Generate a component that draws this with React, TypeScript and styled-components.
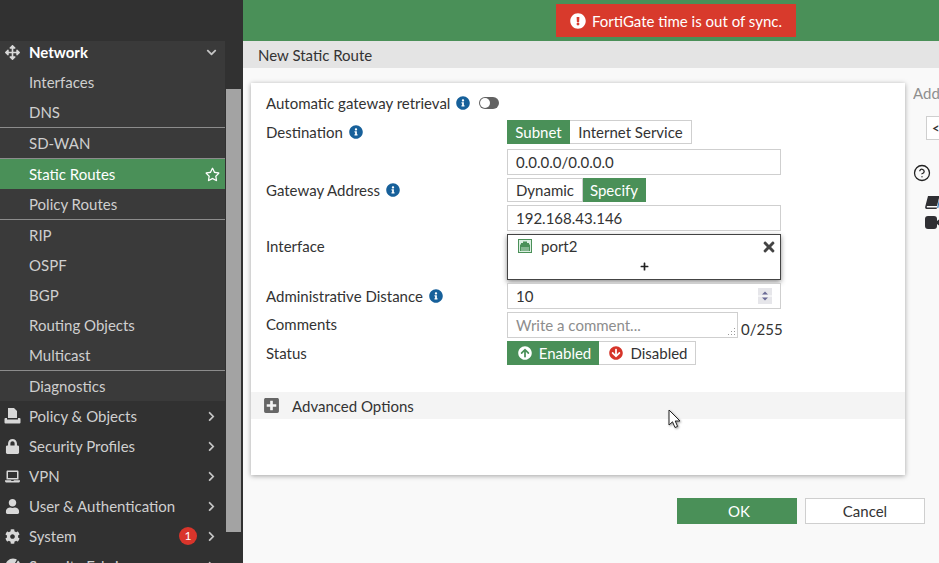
import React from "react";
import styled, { createGlobalStyle } from "styled-components";
import { CircleHelp } from "lucide-react";
import {
  FaArrowCircleDown,
  FaArrowCircleUp,
  FaArrowsAlt,
  FaChevronDown,
  FaChevronRight,
  FaCog,
  FaExclamationCircle,
  FaInfoCircle,
  FaLaptop,
  FaLock,
  FaPlus,
  FaPlusSquare,
  FaRegStar,
  FaTimes,
  FaUser,
} from "react-icons/fa";

const GREEN = "#4a9058";
const BORDER = "#cfcfcf";

const GlobalStyle = createGlobalStyle`
  html, body {
    margin: 0;
    height: 100%;
    overflow: hidden;
  }
  body {
    font-family: Lato, "Open Sans", sans-serif;
    font-size: 15px;
    color: #333;
  }
  * {
    box-sizing: border-box;
  }
`;

const Page = styled.div`
  display: flex;
  width: 939px;
  height: 563px;
  overflow: hidden;
  position: relative;
`;

/* sidebar */
const Sidebar = styled.aside`
  flex: 0 0 243px;
  display: flex;
  height: 563px;
  padding-top: 41px;
  background: #313131;
  overflow: hidden;
`;

const Nav = styled.nav`
  flex: 0 0 225px;
`;

const NetworkGroup = styled.div`
  background: #3a3a3a;
`;

const ScrollTrack = styled.div`
  flex: 1;
  padding: 48px 2px 0 1px;
`;

const ScrollThumb = styled.div`
  height: 443px;
  background: #a3a3a3;
`;

const Divider = styled.div`
  height: 1px;
  background: #8c8c8c;
`;

const Row = styled.div<{ $active?: boolean; $head?: boolean }>`
  display: flex;
  align-items: center;
  height: ${({ $head }) => ($head ? "26px" : "30px")};
  padding-bottom: ${({ $head }) => ($head ? "4px" : "0")};
  background: ${({ $active }) => ($active ? GREEN : "transparent")};
  color: ${({ $active, $head }) => ($active || $head ? "#fff" : "#cfcfcf")};
  font-weight: ${({ $head }) => ($head ? 700 : 400)};
  white-space: nowrap;
`;

const Lead = styled.span`
  flex: 0 0 29px;
  display: flex;
  justify-content: center;
  padding-right: 4px;
  font-size: 15px;
  color: #d8d8d8;
`;

const Trail = styled.span`
  display: flex;
  align-items: center;
  margin-left: auto;
  padding-right: 8px;
  font-size: 11px;
  color: #c4c4c4;
`;

const StarSlot = styled.span`
  display: flex;
  margin-left: auto;
  padding-right: 5px;
  font-size: 15px;
  color: #fff;
`;

const Badge = styled.span`
  width: 18px;
  height: 18px;
  margin-right: 9px;
  border-radius: 50%;
  background: #d9352b;
  color: #fff;
  font-size: 12px;
  line-height: 18px;
  text-align: center;
`;

/* main */
const Main = styled.main`
  flex: 1;
  min-width: 0;
  display: flex;
  flex-direction: column;
  background: #f9f9f9;
`;

const TopBar = styled.header`
  flex: 0 0 41px;
  padding: 4px 0 0 313px;
  background: ${GREEN};
`;

const Toast = styled.div`
  display: flex;
  align-items: center;
  justify-content: center;
  gap: 6px;
  width: 240px;
  height: 33px;
  background: #d83a2c;
  color: #fff;
  svg {
    font-size: 16px;
  }
`;

const TitleBar = styled.div`
  flex: 0 0 27px;
  display: flex;
  align-items: center;
  padding-left: 15px;
  background: #e4e4e4;
  color: #333;
`;

const Body = styled.div`
  padding: 15px 0 0 8px;
`;

const Columns = styled.div`
  display: flex;
`;

const Card = styled.section`
  flex: 0 0 654px;
  height: 392px;
  padding-top: 10px;
  background: #fff;
  box-shadow: 0 1px 5px rgba(0, 0, 0, 0.35);
`;

const FormRow = styled.div<{ $height: number; $gap?: number; $top?: boolean }>`
  display: flex;
  align-items: ${({ $top }) => ($top ? "flex-start" : "center")};
  height: ${({ $height }) => $height}px;
  margin-bottom: ${({ $gap }) => $gap ?? 3}px;
  padding-left: 15px;
`;

const Label = styled.label<{ $offset?: number }>`
  display: flex;
  align-items: center;
  gap: 6px;
  flex: 0 0 241px;
  color: #333;
  white-space: nowrap;
  padding-top: ${({ $offset }) => $offset ?? 0}px;
`;

const InfoIcon = styled(FaInfoCircle)`
  flex: none;
  font-size: 14px;
  color: #17609a;
`;

const Switch = styled.span`
  display: block;
  position: relative;
  width: 20px;
  height: 12px;
  margin-left: 3px;
  border-radius: 6px;
  background: #626262;
  &::before {
    content: "";
    position: absolute;
    left: 1px;
    top: 1px;
    width: 10px;
    height: 10px;
    border-radius: 50%;
    background: #fff;
  }
`;

const Segments = styled.div`
  display: flex;
  height: 24px;
`;

const Segment = styled.div<{ $on?: boolean; $width: number; $iconed?: boolean }>`
  display: flex;
  align-items: center;
  justify-content: center;
  gap: 7px;
  width: ${({ $width }) => $width}px;
  padding-left: ${({ $iconed }) => ($iconed ? "3px" : "0")};
  border: 1px solid ${({ $on }) => ($on ? GREEN : BORDER)};
  background: ${({ $on }) => ($on ? GREEN : "#fff")};
  color: ${({ $on }) => ($on ? "#fff" : "#333")};
  & + & {
    border-left-width: 0;
  }
`;

const UpIcon = styled(FaArrowCircleUp)`
  font-size: 14px;
  color: #fff;
`;

const DownIcon = styled(FaArrowCircleDown)`
  font-size: 14px;
  color: #d6352a;
`;

const Field = styled.div<{ $width?: number; $muted?: boolean }>`
  display: flex;
  align-items: center;
  position: relative;
  width: ${({ $width }) => $width ?? 274}px;
  height: 26px;
  padding-left: 8px;
  border: 1px solid ${BORDER};
  background: #fff;
  color: ${({ $muted }) => ($muted ? "#8d8d8d" : "#333")};
`;

const Spinner = styled.svg`
  position: absolute;
  right: 8px;
  top: 4px;
`;

const Grip = styled.svg`
  position: absolute;
  right: 1px;
  bottom: 1px;
`;

const Counter = styled.span`
  align-self: flex-end;
  margin-left: 3px;
  line-height: 18px;
  color: #333;
`;

const Picker = styled.div`
  width: 274px;
  height: 46px;
  border: 1px solid #444;
  background: #fff;
  box-shadow: 0 2px 5px rgba(0, 0, 0, 0.45);
`;

const PickerItem = styled.div`
  display: flex;
  align-items: center;
  height: 21px;
  padding: 0 3px 0 10px;
`;

const PortName = styled.span`
  margin-left: 9px;
`;

const Remove = styled(FaTimes)`
  margin-left: auto;
  margin-top: 3px;
  font-size: 16px;
  color: #444;
`;

const PickerAdd = styled.div`
  display: flex;
  justify-content: center;
  font-size: 9px;
  padding-top: 6px;
  color: #222;
`;

const Advanced = styled.div`
  display: flex;
  align-items: center;
  height: 27px;
  margin-top: 27px;
  padding-left: 12px;
  background: #f4f4f4;
  color: #333;
`;

const PlusBox = styled(FaPlusSquare)`
  margin-right: 12px;
  font-size: 17px;
  color: #666;
`;

const SidePanel = styled.div`
  flex: 1;
  min-width: 0;
  margin-left: 8px;
  padding-top: 1px;
  overflow: hidden;
  white-space: nowrap;
`;

const SideTitle = styled.div`
  color: #8f8f8f;
  line-height: 18px;
`;

const ApiButton = styled.div`
  display: flex;
  align-items: center;
  width: 120px;
  height: 24px;
  margin: 14px 0 0 13px;
  padding-left: 5px;
  border: 1px solid ${BORDER};
  background: #fff;
  font-size: 13px;
  font-weight: 700;
  color: #333;
`;

const HelpIcon = styled(CircleHelp)`
  display: block;
  margin: 24px 0 0 0;
  color: #222;
`;

const LinkIcons = styled.div`
  display: flex;
  flex-direction: column;
  gap: 7px;
  margin: 14px 0 0 12px;
  svg {
    display: block;
  }
`;

const Actions = styled.div`
  display: flex;
  justify-content: flex-end;
  gap: 8px;
  margin-top: 23px;
  padding-right: 14px;
`;

const ActionButton = styled.div<{ $primary?: boolean }>`
  display: flex;
  align-items: center;
  justify-content: center;
  width: 120px;
  height: 26px;
  padding-left: ${({ $primary }) => ($primary ? "4px" : "0")};
  border: 1px solid ${({ $primary }) => ($primary ? GREEN : BORDER)};
  background: ${({ $primary }) => ($primary ? GREEN : "#fff")};
  color: ${({ $primary }) => ($primary ? "#fff" : "#333")};
`;

const Cursor = styled.svg`
  position: absolute;
  left: 668px;
  top: 409px;
  filter: drop-shadow(1px 1px 1px rgba(0, 0, 0, 0.4));
`;

const PolicyIcon = () => (
  <svg width="17" height="16" viewBox="0 0 17 16" fill="#d8d8d8">
    <path d="M4 0h6l3 3v7H4z" />
    <path d="M1.5 10H3v1.5h11V10h1.5a1 1 0 0 1 1 1v3.5a1 1 0 0 1-1 1h-14a1 1 0 0 1-1-1V11a1 1 0 0 1 1-1z" />
  </svg>
);

const FabricIcon = () => (
  <svg width="16" height="16" viewBox="0 0 16 16">
    <circle cx="8" cy="8" r="7.5" fill="#d8d8d8" />
    <path d="M5 15L13 1M9 15.5L15 5" stroke="#313131" strokeWidth="1.3" />
  </svg>
);

const PortIcon = () => (
  <svg width="14" height="14" viewBox="0 0 14 14">
    <rect x="0.5" y="0.5" width="13" height="13" fill="#dcefe2" stroke="#4a9058" />
    <path d="M5 2.5h4V4h2v1.5h1V12H2V5.5h1V4h2z" fill="#4a9058" />
    <path d="M4 8v4M6 8v4M8 8v4M10 8v4" stroke="#dcefe2" strokeWidth="0.8" />
  </svg>
);

const SlantedBook = () => (
  <svg width="16" height="13" viewBox="0 0 16 13">
    <path d="M3 0h11.5L12 10H2.2a1 1 0 0 0 0 1.6H12l-.4 1.4H1.6C.4 13 0 12 .2 10.8z" fill="#2f2f33" />
    <path d="M15 1.5L12.7 12" stroke="#3b7fc0" strokeWidth="1.2" />
  </svg>
);

const Camera = () => (
  <svg width="18" height="13" viewBox="0 0 18 13" fill="#2f2f33">
    <rect width="12" height="13" rx="3" />
    <path d="M12 5l5-4v11l-5-4z" />
  </svg>
);

const subItems: (string | null)[] = [
  "Interfaces",
  "DNS",
  null,
  "SD-WAN",
  null,
  "Static Routes",
  "Policy Routes",
  null,
  "RIP",
  "OSPF",
  "BGP",
  "Routing Objects",
  "Multicast",
  null,
  "Diagnostics",
];

const topItems: { label: string; icon: React.ReactNode; badge?: number }[] = [
  { label: "Policy & Objects", icon: <PolicyIcon /> },
  { label: "Security Profiles", icon: <FaLock /> },
  { label: "VPN", icon: <FaLaptop /> },
  { label: "User & Authentication", icon: <FaUser /> },
  { label: "System", icon: <FaCog />, badge: 1 },
  { label: "Security Fabric", icon: <FabricIcon /> },
];

const App: React.FC = () => {
  return (
    <Page>
      <GlobalStyle />
      <Sidebar>
        <Nav>
          <NetworkGroup>
            <Row $head>
              <Lead>
                <FaArrowsAlt />
              </Lead>
              Network
              <Trail>
                <FaChevronDown />
              </Trail>
            </Row>
            {subItems.map((item, i) =>
              item === null ? (
                <Divider key={i} />
              ) : (
                <Row key={item} $active={item === "Static Routes"}>
                  <Lead />
                  {item}
                  {item === "Static Routes" && (
                    <StarSlot>
                      <FaRegStar />
                    </StarSlot>
                  )}
                </Row>
              )
            )}
          </NetworkGroup>
          {topItems.map((item) => (
            <Row key={item.label}>
              <Lead>{item.icon}</Lead>
              {item.label}
              <Trail>
                {item.badge && <Badge>{item.badge}</Badge>}
                <FaChevronRight />
              </Trail>
            </Row>
          ))}
        </Nav>
        <ScrollTrack>
          <ScrollThumb />
        </ScrollTrack>
      </Sidebar>

      <Main>
        <TopBar>
          <Toast>
            <FaExclamationCircle />
            FortiGate time is out of sync.
          </Toast>
        </TopBar>
        <TitleBar>New Static Route</TitleBar>
        <Body>
          <Columns>
            <Card>
              <FormRow $height={27} $gap={0} $top>
                <Label $offset={1}>
                  Automatic gateway retrieval <InfoIcon />
                  <Switch />
                </Label>
              </FormRow>
              <FormRow $height={24} $gap={5}>
                <Label>
                  Destination <InfoIcon />
                </Label>
                <Segments>
                  <Segment $on $width={63}>
                    Subnet
                  </Segment>
                  <Segment $width={122}>Internet Service</Segment>
                </Segments>
              </FormRow>
              <FormRow $height={26}>
                <Label />
                <Field>0.0.0.0/0.0.0.0</Field>
              </FormRow>
              <FormRow $height={24}>
                <Label>
                  Gateway Address <InfoIcon />
                </Label>
                <Segments>
                  <Segment $width={76}>Dynamic</Segment>
                  <Segment $on $width={63}>
                    Specify
                  </Segment>
                </Segments>
              </FormRow>
              <FormRow $height={26}>
                <Label />
                <Field>192.168.43.146</Field>
              </FormRow>
              <FormRow $height={46} $top>
                <Label $offset={3}>Interface</Label>
                <Picker>
                  <PickerItem>
                    <PortIcon />
                    <PortName>port2</PortName>
                    <Remove />
                  </PickerItem>
                  <PickerAdd>
                    <FaPlus />
                  </PickerAdd>
                </Picker>
              </FormRow>
              <FormRow $height={26}>
                <Label>
                  Administrative Distance <InfoIcon />
                </Label>
                <Field>
                  10
                  <Spinner width="14" height="16" viewBox="0 0 14 16">
                    <rect width="14" height="16" fill="#e6e6ea" />
                    <path d="M0 8h14" stroke="#fff" />
                    <path d="M7 3.5l3 3H4z" fill="#6a6a96" />
                    <path d="M7 12.5l-3-3h6z" fill="#6a6a96" />
                  </Spinner>
                </Field>
              </FormRow>
              <FormRow $height={26} $top>
                <Label $offset={3}>Comments</Label>
                <Field $width={231} $muted>
                  Write a comment...
                  <Grip width="9" height="9" viewBox="0 0 9 9" fill="#9a9a9a">
                    <rect x="7" y="1" width="1" height="1" />
                    <rect x="7" y="4" width="1" height="1" />
                    <rect x="7" y="7" width="1" height="1" />
                    <rect x="4" y="4" width="1" height="1" />
                    <rect x="4" y="7" width="1" height="1" />
                    <rect x="1" y="7" width="1" height="1" />
                  </Grip>
                </Field>
                <Counter>0/255</Counter>
              </FormRow>
              <FormRow $height={24} $gap={0}>
                <Label>Status</Label>
                <Segments>
                  <Segment $on $iconed $width={92}>
                    <UpIcon />
                    Enabled
                  </Segment>
                  <Segment $iconed $width={97}>
                    <DownIcon />
                    Disabled
                  </Segment>
                </Segments>
              </FormRow>
              <Advanced>
                <PlusBox />
                Advanced Options
              </Advanced>
            </Card>
            <SidePanel>
              <SideTitle>Additional Information</SideTitle>
              <ApiButton>&lt;&gt; API Preview</ApiButton>
              <HelpIcon size={18} strokeWidth={1.7} />
              <LinkIcons>
                <SlantedBook />
                <Camera />
              </LinkIcons>
            </SidePanel>
          </Columns>
          <Actions>
            <ActionButton $primary>OK</ActionButton>
            <ActionButton>Cancel</ActionButton>
          </Actions>
        </Body>
      </Main>

      <Cursor width="14" height="20" viewBox="0 0 14 20">
        <path d="M1 1v15l3.5-3.2L7 18.5l2.6-1.1L7.2 12H12z" fill="#fff" stroke="#222" strokeWidth="1" />
      </Cursor>
    </Page>
  );
};

export default App;
